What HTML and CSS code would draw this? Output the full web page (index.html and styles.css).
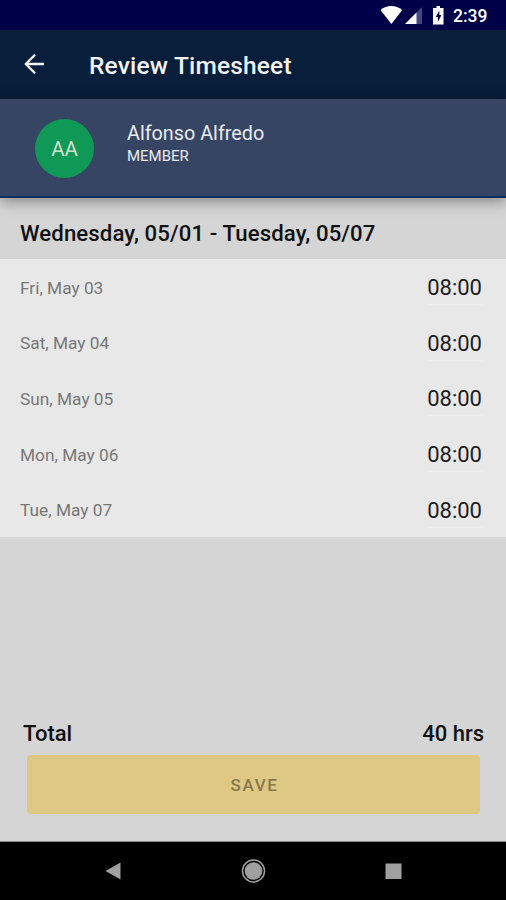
FILE: index.html
```html
<!DOCTYPE html>
<html lang="en">
<head>
<meta charset="utf-8">
<title>Review Timesheet</title>
<link rel="stylesheet" href="styles.css">
</head>
<body>
<div class="statusbar">
  <svg class="status-icons" width="84" height="30" viewBox="0 0 84 30">
    <path d="M.5 10C6.5 4.8 16 4.8 22.3 10L11.4 24Z" fill="#fff"/>
    <path d="M42 7V24H25Z" fill="#454580"/>
    <path d="M36.5 12.5V24H25Z" fill="#fff"/>
    <path d="M56.500 6h3.500v2h3.500v16.500H53V8h3.500Z" fill="#fff"/>
    <path d="M59.300 10.500l-3.500 6.500h2.100v5l3.500-7h-2.100Z" fill="#000048"/>
  </svg>
  <span class="clock">2:39</span>
</div>
<header class="appbar">
  <svg class="back" width="22" height="22" viewBox="0 0 22 22" fill="none" stroke="#f4f4f4" stroke-width="2.300"><path d="M21 11H2.500M12 1.800L2.800 11l9.200 9.200"/></svg>
  <h1 class="title">Review Timesheet</h1>
</header>
<section class="member">
  <div class="avatar"><span>AA</span></div>
  <div class="who">
    <div class="name">Alfonso Alfredo</div>
    <div class="role">MEMBER</div>
  </div>
</section>
<main class="content">
  <h2 class="period"><span>Wednesday, 05/01 - Tuesday, 05/07</span></h2>
  <ul class="days">
    <li><span class="day">Fri, May 03</span><span class="hours">08:00</span></li>
    <li><span class="day">Sat, May 04</span><span class="hours">08:00</span></li>
    <li><span class="day">Sun, May 05</span><span class="hours">08:00</span></li>
    <li><span class="day">Mon, May 06</span><span class="hours">08:00</span></li>
    <li><span class="day">Tue, May 07</span><span class="hours">08:00</span></li>
  </ul>
  <div class="total"><span>Total</span><span>40 hrs</span></div>
  <button class="save">SAVE</button>
</main>
<nav class="navbar">
  <svg width="506" height="58" viewBox="0 0 506 58" fill="#a0a0a0">
    <path d="M105.500 29L120.500 20.500V37.500Z"/>
    <circle cx="253.500" cy="29" r="11" fill="none" stroke="#a0a0a0" stroke-width="1.500"/>
    <circle cx="253.500" cy="29" r="8.800"/>
    <rect x="385.500" y="21.500" width="16" height="15.500"/>
  </svg>
</nav>
</body>
</html>
```
FILE: styles.css
```css
* { box-sizing: border-box; }
body {
  margin: 0;
  height: 900px;
  display: flex;
  flex-direction: column;
  overflow: hidden;
  background: #d5d5d5;
  font-family: Roboto, sans-serif;
}
.statusbar {
  height: 30px;
  display: flex;
  align-items: center;
  padding-left: 380px;
  background: #000048;
}
.status-icons { flex: none; margin-right: -11px; }
.clock { color: #fff; font-size: 17.5px; font-weight: 500; padding-top: 2px; }
.appbar {
  height: 69px;
  display: flex;
  align-items: center;
  padding-left: 23px;
  background: #091e3b;
}
.back { flex: none; margin: -2px 44px 0 0; }
.title {
  margin: 1px 0 0;
  font-size: 24.5px;
  font-weight: 500;
  letter-spacing: .18px;
  color: #f2f2f2;
}
.member {
  height: 99px;
  flex: none;
  display: flex;
  padding: 20px 0 0 35px;
  background: linear-gradient(#3b4563, #364564 8px);
  border-bottom: 2px solid #08305e;
  box-shadow: 0 3px 14px rgba(0, 0, 0, .4);
  z-index: 1;
}
.avatar {
  width: 59px;
  height: 59px;
  display: grid;
  place-items: center;
  margin-right: 33px;
  padding-top: 1px;
  border-radius: 50%;
  background: #0f9856;
  color: #d3dfce;
  font-size: 20.5px;
}
.who { color: #e9ebef; }
.name { padding-top: 1px; font-size: 19.8px; line-height: 28px; }
.role { font-size: 15px; line-height: 17px; }
.content { flex: 1; display: flex; flex-direction: column; }
.period {
  height: 61px;
  margin: 0;
  padding: 21px 20px 0;
  font-size: 22.2px;
  line-height: 28px;
  font-weight: 500;
  letter-spacing: .1px;
  color: #111;
  white-space: nowrap;
}
.days {
  height: 278px;
  margin: 0;
  padding: 0;
  display: grid;
  grid-template-rows: repeat(5, 1fr);
  list-style: none;
  background: #e8e8e8;
}
.days li {
  display: flex;
  align-items: center;
  justify-content: space-between;
  padding: 2px 24px 0 20px;
}
.day { font-size: 17.3px; color: #777; }
.hours {
  padding-top: 2px;
  font-size: 22px;
  line-height: 32px;
  color: #1c1c1c;
  border-bottom: 1px solid #eee;
}
.total {
  display: flex;
  justify-content: space-between;
  margin: auto 22px 7px 23px;
  font-size: 22px;
  line-height: 28px;
  font-weight: 500;
  color: #111;
}
.save {
  height: 59px;
  margin: 0 26px 28px 27px;
  padding: 0 0 0 2px;
  border: 0;
  border-radius: 4px;
  background: #dec884;
  color: #86784e;
  font: 500 17px Roboto, sans-serif;
  letter-spacing: 1.6px;
}
.navbar {
  height: 58px;
  background: #000;
  box-shadow: 0 -1px 0 #888;
}
.navbar svg { display: block; }
```
